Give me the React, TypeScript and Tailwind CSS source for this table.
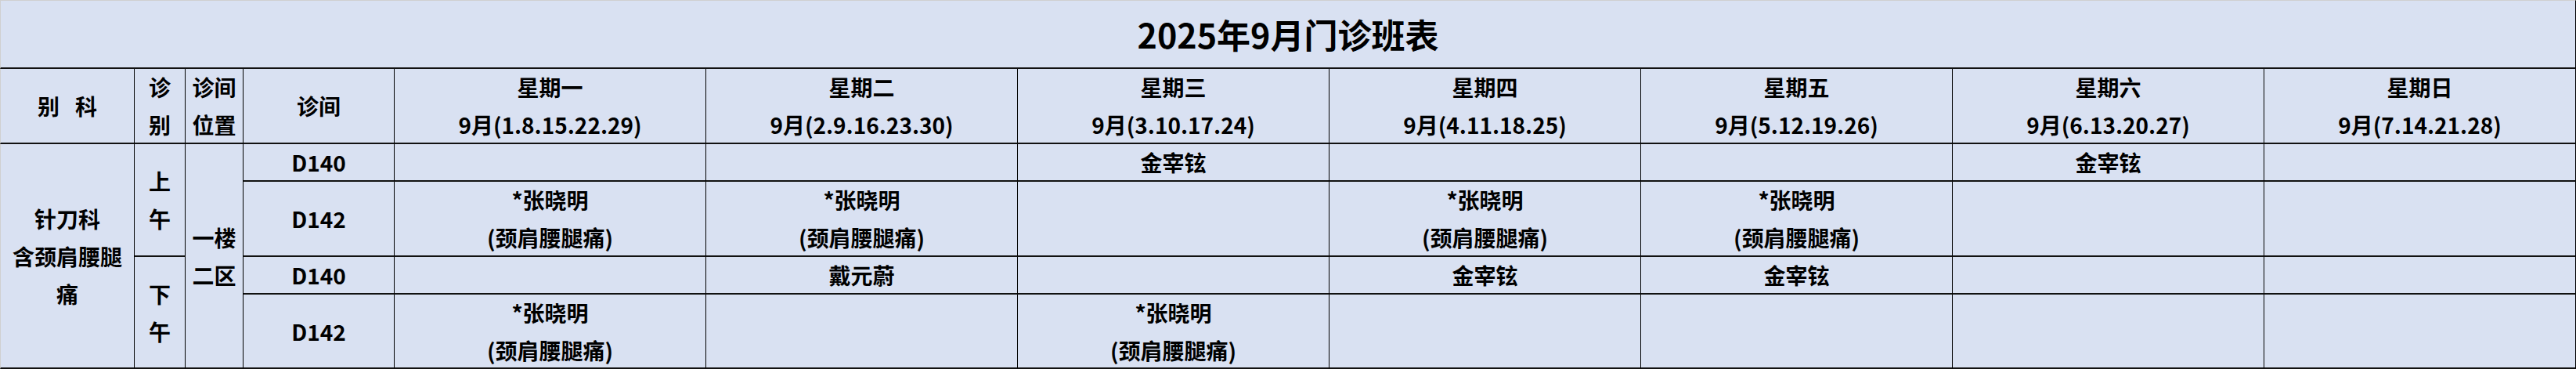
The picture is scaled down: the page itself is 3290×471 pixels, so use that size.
import React from "react";

const FONT = { fontFamily: '"Noto Sans CJK SC", "Noto Sans", sans-serif' };

type CellProps = {
  children?: React.ReactNode;
  className?: string;
};

function Cell({ children, className = "" }: CellProps) {
  return (
    <div
      className={`flex flex-col items-center justify-center text-center border-r border-r-black border-b-2 border-b-[#111] leading-[48px] whitespace-nowrap ${className}`}
    >
      {children}
    </div>
  );
}

const days = [
  { name: "星期一", dates: "9月(1.8.15.22.29)" },
  { name: "星期二", dates: "9月(2.9.16.23.30)" },
  { name: "星期三", dates: "9月(3.10.17.24)" },
  { name: "星期四", dates: "9月(4.11.18.25)" },
  { name: "星期五", dates: "9月(5.12.19.26)" },
  { name: "星期六", dates: "9月(6.13.20.27)" },
  { name: "星期日", dates: "9月(7.14.21.28)" },
];

type Entry = "" | "jin" | "zhang" | "dai";

const rows: { room: string; entries: Entry[] }[] = [
  { room: "D140", entries: ["", "", "jin", "", "", "jin", ""] },
  { room: "D142", entries: ["zhang", "zhang", "", "zhang", "zhang", "", ""] },
  { room: "D140", entries: ["", "dai", "", "jin", "jin", "", ""] },
  { room: "D142", entries: ["zhang", "", "zhang", "", "", "", ""] },
];

function EntryContent({ e }: { e: Entry }) {
  if (e === "jin") return <span>金宰铉</span>;
  if (e === "dai") return <span>戴元蔚</span>;
  if (e === "zhang")
    return (
      <>
        <span>*张晓明</span>
        <span>(颈肩腰腿痛)</span>
      </>
    );
  return null;
}

const rowStarts = ["row-start-3", "row-start-4", "row-start-5", "row-start-6"];
const dayCols = [
  "col-start-5",
  "col-start-6",
  "col-start-7",
  "col-start-8",
  "col-start-9",
  "col-start-10",
  "col-start-11",
];

export default function App() {
  return (
    <div
      className="w-[3290px] h-[471px] bg-[#D9E1F2] text-black font-bold text-[28px] overflow-hidden"
      style={FONT}
    >
      <div className="grid grid-cols-[172px_65px_74px_193px_398px_398px_398px_398px_398px_398px_398px] grid-rows-[88px_96px_48px_96px_48px_95px] w-[3290px] h-[471px]">
        {/* Title */}
        <div className="col-span-11 row-start-1 flex items-center justify-center border-t border-t-[#d0d0d0] border-l border-l-[#d0d0d0] border-r border-r-black border-b-2 border-b-[#111] text-[43px] leading-none">
          2025年9月门诊班表
        </div>

        {/* Header row */}
        <Cell className="row-start-2 col-start-1 border-l border-l-[#d0d0d0]">
          <div className="flex gap-[20px]">
            <span>别</span>
            <span>科</span>
          </div>
        </Cell>
        <Cell className="row-start-2 col-start-2">
          <span>诊</span>
          <span>别</span>
        </Cell>
        <Cell className="row-start-2 col-start-3">
          <span>诊间</span>
          <span>位置</span>
        </Cell>
        <Cell className="row-start-2 col-start-4">
          <span>诊间</span>
        </Cell>
        {days.map((d, i) => (
          <Cell key={d.name} className={`row-start-2 ${dayCols[i]}`}>
            <span>{d.name}</span>
            <span>{d.dates}</span>
          </Cell>
        ))}

        {/* Department */}
        <Cell className="col-start-1 row-start-3 row-span-4 border-l border-l-[#d0d0d0] border-b">
          <span>针刀科</span>
          <span>含颈肩腰腿</span>
          <span>痛</span>
        </Cell>

        {/* AM / PM */}
        <Cell className="col-start-2 row-start-3 row-span-2">
          <span>上</span>
          <span>午</span>
        </Cell>
        <Cell className="col-start-2 row-start-5 row-span-2 border-b">
          <span>下</span>
          <span>午</span>
        </Cell>

        {/* Location */}
        <Cell className="col-start-3 row-start-3 row-span-4 border-b">
          <span>一楼</span>
          <span>二区</span>
        </Cell>

        {/* Rooms & schedule */}
        {rows.map((r, ri) => (
          <React.Fragment key={ri}>
            <Cell className={`col-start-4 ${rowStarts[ri]} ${ri === 3 ? "border-b" : ""}`}>
              <span>{r.room}</span>
            </Cell>
            {r.entries.map((e, di) => (
              <Cell
                key={di}
                className={`${dayCols[di]} ${rowStarts[ri]} ${ri === 3 ? "border-b" : ""}`}
              >
                <EntryContent e={e} />
              </Cell>
            ))}
          </React.Fragment>
        ))}
      </div>
    </div>
  );
}
